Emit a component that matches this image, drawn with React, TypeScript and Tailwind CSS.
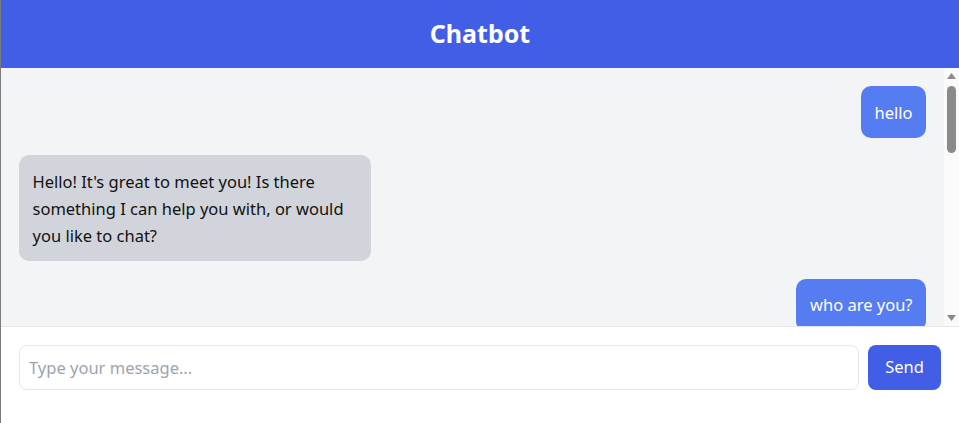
import React from "react";

type Msg = { from: "user" | "bot"; text: string };

const messages: Msg[] = [
  { from: "user", text: "hello" },
  {
    from: "bot",
    text: "Hello! It's great to meet you! Is there something I can help you with, or would you like to chat?",
  },
  { from: "user", text: "who are you?" },
];

function Bubble({ m }: { m: Msg }) {
  const isUser = m.from === "user";
  return (
    <div className={isUser ? "flex justify-end" : "flex justify-start"}>
      <div
        className={
          isUser
            ? "max-w-[352px] rounded-[10px] bg-[#567cf2] px-[13.5px] py-[12.5px] text-[16.5px] leading-[27px] text-white"
            : "max-w-[352px] rounded-[10px] bg-[#d1d5db] px-[13.5px] py-[12.5px] text-[16.5px] leading-[27px] text-[#111111]"
        }
      >
        {m.text}
      </div>
    </div>
  );
}

export default function App() {
  return (
    <div
      className="flex min-h-screen flex-col border-l border-[#7b7b7b] bg-white"
      style={{ fontFamily: '"Noto Sans", "Open Sans", sans-serif' }}
    >
      <header className="flex h-[68px] shrink-0 items-center justify-center bg-[#425de6]">
        <h1 className="text-[25px] font-bold text-white">Chatbot</h1>
      </header>

      <div className="flex h-[258px] shrink-0 bg-[#f3f4f6]">
        <div className="flex flex-1 flex-col gap-[17.4px] overflow-hidden px-[18px] pt-[18px]">
          {messages.map((m, i) => (
            <Bubble key={i} m={m} />
          ))}
        </div>
        <div className="flex w-[15px] shrink-0 flex-col items-center bg-[#fafafa] pt-[5px] pb-[5px]">
          <svg width="9" height="6" viewBox="0 0 9 6">
            <path d="M4.5 0 L9 6 L0 6 Z" fill="#8a8a8a" />
          </svg>
          <div className="mt-[7px] h-[67px] w-[9px] rounded-full bg-[#8a8a8a]" />
          <div className="flex-1" />
          <svg width="9" height="6" viewBox="0 0 9 6">
            <path d="M0 0 L9 0 L4.5 6 Z" fill="#8a8a8a" />
          </svg>
        </div>
      </div>

      <div className="flex flex-1 gap-[9px] border-t border-[#e5e7eb] px-[18px] pt-[18px] pb-[33px]">
        <input
          type="text"
          placeholder="Type your message..."
          className="h-[45px] flex-1 rounded-lg border border-[#e5e7eb] px-[9px] text-[16.5px] text-[#111] outline-none placeholder:text-[#9ca3af]"
        />
        <button className="h-[45px] w-[73px] rounded-lg bg-[#425de6] text-[16.5px] text-white">
          Send
        </button>
      </div>
    </div>
  );
}
